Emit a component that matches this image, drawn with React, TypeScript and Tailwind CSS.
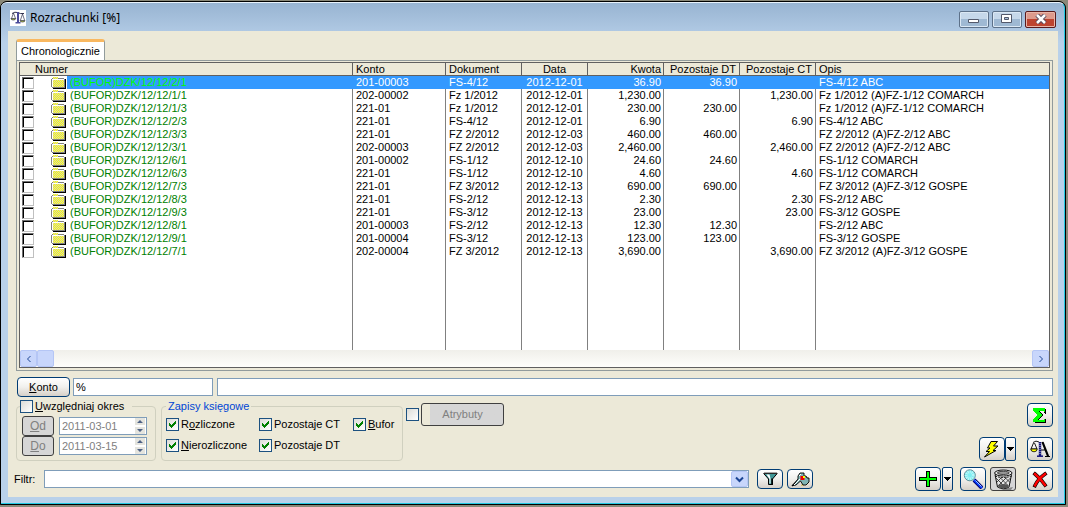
import React from "react";

type Row = [string, string, string, string, string, string, string, string];

const rows: Row[] = [
  ["(BUFOR)DZK/12/12/2/1", "201-00003", "FS-4/12", "2012-12-01", "36.90", "36.90", "", "FS-4/12 ABC"],
  ["(BUFOR)DZK/12/12/1/1", "202-00002", "Fz 1/2012", "2012-12-01", "1,230.00", "", "1,230.00", "Fz 1/2012 (A)FZ-1/12 COMARCH"],
  ["(BUFOR)DZK/12/12/1/3", "221-01", "Fz 1/2012", "2012-12-01", "230.00", "230.00", "", "Fz 1/2012 (A)FZ-1/12 COMARCH"],
  ["(BUFOR)DZK/12/12/2/3", "221-01", "FS-4/12", "2012-12-01", "6.90", "", "6.90", "FS-4/12 ABC"],
  ["(BUFOR)DZK/12/12/3/3", "221-01", "FZ 2/2012", "2012-12-03", "460.00", "460.00", "", "FZ 2/2012 (A)FZ-2/12 ABC"],
  ["(BUFOR)DZK/12/12/3/1", "202-00003", "FZ 2/2012", "2012-12-03", "2,460.00", "", "2,460.00", "FZ 2/2012 (A)FZ-2/12 ABC"],
  ["(BUFOR)DZK/12/12/6/1", "201-00002", "FS-1/12", "2012-12-10", "24.60", "24.60", "", "FS-1/12 COMARCH"],
  ["(BUFOR)DZK/12/12/6/3", "221-01", "FS-1/12", "2012-12-10", "4.60", "", "4.60", "FS-1/12 COMARCH"],
  ["(BUFOR)DZK/12/12/7/3", "221-01", "FZ 3/2012", "2012-12-13", "690.00", "690.00", "", "FZ 3/2012 (A)FZ-3/12 GOSPE"],
  ["(BUFOR)DZK/12/12/8/3", "221-01", "FS-2/12", "2012-12-13", "2.30", "", "2.30", "FS-2/12 ABC"],
  ["(BUFOR)DZK/12/12/9/3", "221-01", "FS-3/12", "2012-12-13", "23.00", "", "23.00", "FS-3/12 GOSPE"],
  ["(BUFOR)DZK/12/12/8/1", "201-00003", "FS-2/12", "2012-12-13", "12.30", "12.30", "", "FS-2/12 ABC"],
  ["(BUFOR)DZK/12/12/9/1", "201-00004", "FS-3/12", "2012-12-13", "123.00", "123.00", "", "FS-3/12 GOSPE"],
  ["(BUFOR)DZK/12/12/7/1", "202-00004", "FZ 3/2012", "2012-12-13", "3,690.00", "", "3,690.00", "FZ 3/2012 (A)FZ-3/12 GOSPE"],
];

const headers = ["Numer", "Konto", "Dokument", "Data", "Kwota", "Pozostaje DT", "Pozostaje CT", "Opis"];
const headAlign = [
  "text-left pl-[15px]",
  "text-left pl-[3px]",
  "text-left pl-[3px]",
  "text-center",
  "text-right pr-[2px]",
  "text-right pr-[3px]",
  "text-right pr-[3px]",
  "text-left pl-[3px]",
];
const cellAlign = [
  "",
  "text-left pl-[3px]",
  "text-left pl-[3px]",
  "text-center",
  "text-right pr-[2px]",
  "text-right pr-[2px]",
  "text-right pr-[2px]",
  "text-left pl-[3px]",
];

const raised =
  "flex shrink-0 items-center justify-center rounded-[4px] border border-[#003c74] bg-linear-to-b from-white via-[#f1f0ed] to-[#d6d0c8]";
const field = "min-w-0 border border-[#7f9db9] bg-white";

// Every other pixel of a block, as one path.
function dither(x0: number, y0: number, w: number, h: number) {
  let d = "";
  for (let y = y0; y < y0 + h; y++) {
    for (let x = x0; x < x0 + w; x++) {
      if ((x + y) % 2 === 0) d += `M${x} ${y}h1v1h-1z`;
    }
  }
  return d;
}

const folderDots = dither(2, 3, 11, 7) + dither(2, 0, 5, 2);

function Folder() {
  return (
    <svg width="15" height="12" viewBox="0 0 15 12" shapeRendering="crispEdges" aria-hidden="true">
      <path fill="#000" d="M2 11h13v1H2zM14 2h1v10h-1z" />
      <path fill="#808080" d="M0 2h1v8H0zM1 10h13v1H1zM13 2h1v9h-1zM1 1h1v1H1zM7 1h6v1H7z" />
      <path fill="#fff" d="M1 2h12v1H1zM1 3h1v7H1z" />
      <path fill="#d0d0c0" d="M2 3h11v7H2zM2 0h5v2H2z" />
      <path fill="#ff0" d={folderDots} />
    </svg>
  );
}

function AppIcon() {
  return (
    <svg width="16" height="16" viewBox="0 0 16 16" className="bg-white" aria-hidden="true">
      <g fill="none" stroke="#33334f">
        <path d="M2 3.500Q5 1.500 7.500 2.500Q10 4 14 3.500" />
        <path d="M3.500 3 1.500 8.500M3.500 3 5.500 8.500M12.500 4 10.500 10M12.500 4 14.500 10" strokeWidth=".7" />
      </g>
      <path fill="#4a4a9a" d="M7 2h2v10H7zM5.500 12h5v1.500h-5z" />
      <path fill="#b4c832" stroke="#33334f" strokeWidth=".7" d="M.9 8.500h4.900Q5.500 10 3.300 10T.9 8.500zM10 10.500h5Q15 12 12.500 12T10 10.500z" />
    </svg>
  );
}

function SigmaIcon() {
  return (
    <svg width="16" height="17" viewBox="0 0 16 17" shapeRendering="crispEdges" aria-hidden="true">
      <path fill="#000" d="M3 2h11v5h-1V6h-1V4H8l3 4-4 5h4l1-1h2v4H3v-2l4-6-4-4z" />
      <path fill="#0f0" d="M1 1h12v4h-1l-1-1H6l4 4-4 5h5l1-1h1v3H1v-2l4-5-4-4z" />
    </svg>
  );
}

function BoltIcon() {
  return (
    <svg width="18" height="18" viewBox="0 0 18 18" aria-hidden="true">
      <path fill="#ff0" stroke="#000" d="M8 1.500h6.500L10.500 6H15l-5 4.500h3L1.500 17l5-5.500H3L7 8H4.500z" />
    </svg>
  );
}

function ScaleLetterIcon() {
  return (
    <svg width="20" height="18" viewBox="0 0 20 18" aria-hidden="true">
      <g fill="none" stroke="#000">
        <path d="M3.500 3 1 9h6L4.500 3M3 2.500Q6 0 9 2" strokeWidth=".9" />
        <path d="M12 2 17.500 16M13 2 18.500 16M11 10h5M15 16.500h5" strokeWidth="1.200" />
      </g>
      <path fill="#ff0" stroke="#000" strokeWidth=".8" d="M.7 9h6.600Q7 11.800 4 11.800T.7 9z" />
      <path stroke="#10107a" strokeWidth="2.400" d="M10 2v14" />
      <path stroke="#aab" strokeWidth="1.200" strokeDasharray="1 1" d="M10 3v12" />
      <path stroke="#10107a" strokeWidth="1.500" d="M7 16.200h6" />
    </svg>
  );
}

function PlusIcon() {
  return (
    <svg width="18" height="16" viewBox="0 0 18 16" shapeRendering="crispEdges" aria-hidden="true">
      <path fill="#000" d="M7 0h4v6h7v4h-7v6H7v-6H0V6h7z" />
      <path fill="#0f0" d="M8 1h2v6h7v2h-7v6H8V9H1V7h7z" />
    </svg>
  );
}

function MagnifierIcon() {
  return (
    <svg width="20" height="20" viewBox="0 0 20 20" aria-hidden="true">
      <path stroke="#000070" strokeWidth="4" d="m11 11 8 8" />
      <path stroke="#0a3cff" strokeWidth="2" d="m11 11 8 8" />
      <path stroke="#9fd0ff" d="m12.500 11.500 6 6" />
      <circle cx="6.800" cy="6.300" r="5.500" fill="#7feef2" stroke="#5d8a94" />
      <circle cx="6.800" cy="6.300" r="3.500" fill="none" stroke="#fff" strokeWidth="3" strokeDasharray="1 1" opacity=".5" />
    </svg>
  );
}

function BinIcon() {
  return (
    <svg width="21" height="21" viewBox="0 0 21 21" aria-hidden="true">
      <path fill="#888" d="m15 19 5-1-2 3H8z" />
      <path fill="#e4e4e4" stroke="#111" d="M2 5.500 4.500 18q6 3.500 11.500 0L18.500 5.500z" />
      <path
        fill="none"
        stroke="#222"
        strokeWidth=".8"
        d="m3 9 8 8M7 8.500l8 8M12 8.500l5 5M17.500 9l-8 8M13.500 8.500l-8 8M8.500 8.500l-5 5"
      />
      <path fill="#555" d="M5 16q5-2 10.500 0L15 18.500q-5 2-9.500 0z" />
      <ellipse cx="10.300" cy="4" rx="8.700" ry="3" fill="#eee" stroke="#111" />
      <ellipse cx="10.300" cy="3.900" rx="6" ry="1.600" fill="#999" stroke="#222" strokeWidth=".8" />
      <path stroke="#111" strokeDasharray="2 1" d="M2 7q8 3 17 0" fill="none" />
    </svg>
  );
}

function CrossIcon() {
  return (
    <svg width="16" height="17" viewBox="0 0 16 17" aria-hidden="true">
      <path fill="none" stroke="#000" strokeWidth="3.600" strokeLinecap="square" d="M3 3Q9 8 13 14M13 3Q6 8 3 14.500" />
      <path fill="none" stroke="#f00" strokeWidth="2.400" strokeLinecap="square" d="M3 3Q9 8 13 14M13 3Q6 8 3 14.500" />
    </svg>
  );
}

function FunnelIcon() {
  return (
    <svg width="15" height="14" viewBox="0 0 15 14" aria-hidden="true">
      <path fill="#3f9696" stroke="#000" d="M.7 1.500h13.500L9.500 7v5.500h-4V7z" />
      <path fill="#fff" d="M3.500 2.500h3l1 4v5h-1V7z" />
      <path stroke="#555" d="M1 1h13" />
      <path stroke="#000" d="M9 6.500V13" strokeWidth="1.500" />
    </svg>
  );
}

function WrenchIcon() {
  return (
    <svg width="19" height="15" viewBox="0 0 19 15" aria-hidden="true">
      <path stroke="#000" strokeWidth="1.500" d="m1 14 8-8" />
      <path fill="#d8b830" d="m10 14 7-2 1-5-3-3z" />
      <path fill="#7fb3b3" stroke="#000" strokeWidth=".9" d="M7 7V4l2-3h4v3h2l1 2h2v4l-3 3h-3L9.500 9 5 13l-3 .5z" />
      <path fill="#e00" d="M9.500 4h4v4h-4z" />
      <path fill="#ff0" d="M12 4h2v2h-2z" />
      <path stroke="#fff" d="m8 4 2-2M3 13l6-6" />
    </svg>
  );
}

function Down() {
  return (
    <svg width="7" height="4" viewBox="0 0 7 4" shapeRendering="crispEdges" aria-hidden="true">
      <path d="M0 0h7v1H6v1H5v1H4v1H3V3H2V2H1V1H0z" />
    </svg>
  );
}

function Tool({ label, children, height = "h-6" }: { label: string; children: React.ReactNode; height?: string }) {
  return (
    <button type="button" aria-label={label} className={`${raised} w-[26px] ${height}`}>
      {children}
    </button>
  );
}

function DropTool({ label, gap, children }: { label: string; gap: string; children: React.ReactNode }) {
  return (
    <div className={`flex ${gap}`}>
      <Tool label={label}>{children}</Tool>
      <button
        type="button"
        aria-label={`${label} – menu`}
        className="flex h-6 w-[11px] shrink-0 items-center justify-center rounded-[2px] border border-[#003c74] bg-linear-to-b from-white via-[#f1f0ed] to-[#d6d0c8]"
      >
        <Down />
      </button>
    </div>
  );
}

const tick =
  "m-0 size-[13px] shrink-0 appearance-none border border-[#1c5180] bg-linear-to-br from-[#dcdcd7] to-white";

function Check({ children }: { children: React.ReactNode }) {
  return (
    <label className="flex items-center gap-[2px] whitespace-nowrap">
      <span className="grid">
        <input type="checkbox" defaultChecked className={`${tick} peer col-start-1 row-start-1`} />
        <svg
          width="13"
          height="13"
          viewBox="0 0 13 13"
          shapeRendering="crispEdges"
          className="pointer-events-none invisible col-start-1 row-start-1 peer-checked:visible"
          aria-hidden="true"
        >
          <path fill="#008000" d="M3 5h1v1h1v1h1V6h1V5h1V4h1V3h1v3H9v1H8v1H7v1H6v1H5V9H4V8H3z" />
        </svg>
      </span>
      <span>{children}</span>
    </label>
  );
}

function DateField({ id, letter, rest, value }: { id: string; letter: string; rest: string; value: string }) {
  return (
    <div className="flex items-center gap-[5px]">
      <button
        type="button"
        disabled
        className="h-5 w-8 rounded-[3px] border border-[#404040] bg-[#d6d6d6] text-xs leading-4 text-[#808080]"
      >
        <u>{letter}</u>
        {rest}
      </button>
      <div className={`${field} flex h-[18px] w-[88px] items-center`}>
        <input
          id={id}
          aria-label={letter + rest}
          disabled
          defaultValue={value}
          className="w-full min-w-0 bg-transparent pl-[2px] text-[#808080]"
        />
        <svg width="12" height="16" viewBox="0 0 12 16" className="shrink-0" aria-hidden="true">
          <path fill="#e4e4de" d="M1 0h10v7H1zM1 9h10v7H1z" />
          <path fill="#4d6185" d="m3 5 3-3 3 3zM3 11h6l-3 3z" />
        </svg>
      </div>
    </div>
  );
}

export default function App() {
  return (
    <div className="flex min-h-screen flex-col bg-[#8a8878] pt-px pr-[2px] pb-[2px] font-['Liberation_Sans',Arial,sans-serif] text-[11px] leading-[13px] text-black">
      <div className="flex flex-1 flex-col rounded-t-[7px] border border-black bg-black">
        <main className="flex flex-1 flex-col rounded-t-md border-t border-r border-b border-[#22c9e3] border-t-[#e8f2fb] bg-[#b9d1ea] bg-linear-to-b from-[#98b4d2] to-[#b9d1ea] to-[40px] pr-[6px] pb-[6px] pl-[7px]">
          <header className="flex h-7 shrink-0 items-center gap-1 pt-[2px] pl-[2px]">
            <AppIcon />
            <h1 className="flex-1 font-['Noto_Sans',sans-serif] text-xs leading-4">Rozrachunki [%]</h1>
            <div className="flex gap-[3px] pt-[2px] pr-[2px]">
              <button
                type="button"
                aria-label="Minimalizuj"
                className="flex h-[17px] w-[30px] items-center justify-center rounded-[2px] border border-[#5d7189] bg-linear-to-b from-[#c6d8ea] from-50% to-[#9fb9d3] to-50% inset-ring inset-ring-[#dbe8f4]"
              >
                <svg width="12" height="12" viewBox="0 0 12 12" aria-hidden="true">
                  <path fill="#fff" stroke="#53596b" d="M.5 6.500h10v3H.5z" />
                </svg>
              </button>
              <button
                type="button"
                aria-label="Maksymalizuj"
                className="flex h-[17px] w-[30px] items-center justify-center rounded-[2px] border border-[#5d7189] bg-linear-to-b from-[#c6d8ea] from-50% to-[#9fb9d3] to-50% inset-ring inset-ring-[#dbe8f4]"
              >
                <svg width="12" height="10" viewBox="0 0 12 10" aria-hidden="true">
                  <path fill="#fff" stroke="#53596b" d="M.5.5h10v8H.5z" />
                  <path fill="#a9c1da" stroke="#53596b" d="M3.500 3.500h4v2h-4z" />
                </svg>
              </button>
              <button
                type="button"
                aria-label="Zamknij"
                className="flex h-[17px] w-[31px] items-center justify-center rounded-[2px] border border-[#5a1a1c] bg-linear-to-b from-[#dd9a8c] from-50% to-[#bd4430] to-50% inset-ring inset-ring-[#e9b5a8]"
              >
                <svg width="12" height="10" viewBox="0 0 12 10" aria-hidden="true">
                  <path stroke="#53485b" strokeWidth="4.500" d="m2 1 8 8M10 1 2 9" />
                  <path stroke="#fff" strokeWidth="2.500" d="m2 1 8 8M10 1 2 9" />
                </svg>
              </button>
            </div>
          </header>

          <div className="flex flex-1 flex-col bg-[#ece9d8] pt-2 pr-[5px] pb-[6px] pl-[6px]">
            <div role="tablist" className="flex pl-[2px]">
              <button
                type="button"
                role="tab"
                aria-selected="true"
                className="h-[21px] rounded-t-[3px] border-x border-t-[3px] border-x-[#919b9c] border-t-[#f9b860] bg-white px-1"
              >
                Chronologicznie
              </button>
            </div>

            <section className="ml-[2px] border border-[#919b9c] pt-px pr-[2px] pb-[2px] pl-[2px]">
              <div className="border border-[#606060] bg-white">
                <table className="w-full table-fixed border-separate border-spacing-0">
                  <colgroup>
                    <col className="w-[333px]" />
                    <col className="w-[93px]" />
                    <col className="w-[76px]" />
                    <col className="w-[66px]" />
                    <col className="w-[76px]" />
                    <col className="w-[76px]" />
                    <col className="w-[76px]" />
                    <col />
                  </colgroup>
                  <thead>
                    <tr className="bg-[#ece9d8]">
                      {headers.map((h, i) => (
                        <th
                          key={h}
                          className={`h-[13px] border-b border-[#606060] py-0 leading-3 font-normal whitespace-nowrap not-last:border-r ${headAlign[i]}`}
                        >
                          {h}
                        </th>
                      ))}
                    </tr>
                  </thead>
                  <tbody>
                    {rows.map((r, n) => (
                      <tr key={r[0]} className={n === 0 ? "text-white" : ""}>
                        <td className={`h-[13px] border-r p-0 ${n === 0 ? "border-[#3399ff]" : "border-[#808080]"}`}>
                          <div className="flex h-[13px] items-center">
                            <input
                              type="checkbox"
                              aria-label={r[0]}
                              className="m-0 ml-[2px] size-[12px] shrink-0 appearance-none border border-t-[#707070] border-r-[#c0c0c0] border-b-[#c0c0c0] border-l-[#707070] bg-white shadow-[inset_1px_1px_0_#000] checked:bg-black"
                            />
                            <span className="ml-[17px] shrink-0">
                              <Folder />
                            </span>
                            <span
                              className={`ml-px flex-1 pl-[3px] whitespace-nowrap ${
                                n === 0 ? "bg-[#3399ff] text-[#00ff00]" : "text-[#008000]"
                              }`}
                            >
                              {r[0]}
                            </span>
                          </div>
                        </td>
                        {r.slice(1).map((v, i) => (
                          <td
                            key={i}
                            className={`h-[13px] overflow-hidden py-0 whitespace-nowrap not-last:border-r ${
                              n === 0 ? "border-[#3399ff] bg-[#3399ff]" : "border-[#808080]"
                            } ${cellAlign[i + 1]}`}
                          >
                            {v}
                          </td>
                        ))}
                      </tr>
                    ))}
                    <tr aria-hidden="true">
                      {headers.map((h) => (
                        <td key={h} className="h-[92px] border-[#808080] p-0 not-last:border-r" />
                      ))}
                    </tr>
                  </tbody>
                </table>
                <div className="flex h-[17px] bg-linear-to-b from-[#f0efea] to-[#fefefb]">
                  <button
                    type="button"
                    aria-label="W lewo"
                    className="flex w-[17px] items-center justify-center rounded-[2px] border border-[#b5c6f5] bg-[#c8d6fb]"
                  >
                    <svg width="6" height="8" viewBox="0 0 6 8" fill="none" stroke="#1c4695" aria-hidden="true">
                      <path d="M4.500 1 1.500 4l3 3" />
                    </svg>
                  </button>
                  <div className="w-[17px] rounded-[2px] border border-[#b5c6f5] bg-[#c8d6fb]" />
                  <div className="flex-1" />
                  <button
                    type="button"
                    aria-label="W prawo"
                    className="flex w-[17px] items-center justify-center rounded-[2px] border border-[#b5c6f5] bg-[#c8d6fb]"
                  >
                    <svg width="6" height="8" viewBox="0 0 6 8" fill="none" stroke="#1c4695" aria-hidden="true">
                      <path d="m1.500 1 3 3-3 3" />
                    </svg>
                  </button>
                </div>
              </div>
            </section>

            <div className="mt-[6px] flex items-center pl-[3px]">
              <button type="button" className={`${raised} h-5 w-[53px]`}>
                <span>
                  <u>K</u>onto
                </span>
              </button>
              <input aria-label="Konto" defaultValue="%" className={`${field} ml-[3px] h-[18px] w-[140px] pl-[2px]`} />
              <input aria-label="Nazwa konta" className={`${field} ml-1 h-[18px] flex-1`} />
            </div>

            <div className="mt-[3px] flex items-start pl-[2px]">
              <fieldset className="h-[61px] w-[140px] rounded-[4px] border border-[#d0d0bf] px-[5px]">
                <legend className="-ml-[2px] pr-2">
                  <label className="flex items-center gap-[2px]">
                    <input type="checkbox" className={`${tick} checked:bg-[#21a121]`} />
                    <span>
                      <u>U</u>względniaj okres
                    </span>
                  </label>
                </legend>
                <div className="pt-[3px]">
                  <DateField id="od" letter="O" rest="d" value="2011-03-01" />
                  <DateField id="do" letter="D" rest="o" value="2011-03-15" />
                </div>
              </fieldset>
              <fieldset className="ml-[5px] h-[61px] w-[242px] rounded-[4px] border border-[#d0d0bf] px-1">
                <legend className="px-[2px] text-[#0046d5]">Zapisy księgowe</legend>
                <div className="grid grid-cols-[93px_94px_auto] gap-y-2 pt-[5px]">
                  <Check>
                    R<u>o</u>zliczone
                  </Check>
                  <Check>Pozostaje CT</Check>
                  <Check>
                    <u>B</u>ufor
                  </Check>
                  <Check>
                    <u>N</u>ierozliczone
                  </Check>
                  <Check>Pozostaje DT</Check>
                </div>
              </fieldset>
              <div className="ml-[3px] flex items-center gap-[2px] pt-[3px]">
                <input type="checkbox" aria-label="Atrybuty" className={`${tick} checked:bg-[#21a121]`} />
                <button
                  type="button"
                  disabled
                  className="h-[23px] w-[83px] rounded-[3px] border border-[#404040] bg-[#d6d6d6] bg-linear-to-r from-[#ece9d8] from-[8px] to-[#d6d6d6] to-[8px] text-[#808080]"
                >
                  Atrybuty
                </button>
              </div>
              <div className="ml-auto flex flex-col items-end gap-[10px] pt-[3px]">
                <Tool label="Suma">
                  <SigmaIcon />
                </Tool>
                <div className="flex gap-[11px]">
                  <DropTool label="Operacje" gap="gap-0">
                    <BoltIcon />
                  </DropTool>
                  <Tool label="Bilans">
                    <ScaleLetterIcon />
                  </Tool>
                </div>
              </div>
            </div>

            <div className="mt-[6px] flex items-center">
              <label htmlFor="filtr" className="w-[30px]">
                Filtr:
              </label>
              <div className={`${field} flex h-[18px] max-w-[705px] flex-1`}>
                <input id="filtr" className="min-w-0 flex-1 bg-transparent px-1" />
                <button
                  type="button"
                  aria-label="Rozwiń"
                  className="flex w-[17px] items-center justify-center rounded-[2px] border border-[#b5c6f5] bg-[#c8d6fb]"
                >
                  <svg width="9" height="7" viewBox="0 0 9 7" fill="none" stroke="#1c4695" strokeWidth="2" aria-hidden="true">
                    <path d="m1 1.500 3.500 3.500L8 1.500" />
                  </svg>
                </button>
              </div>
              <div className="ml-2 flex gap-1">
                <Tool label="Zastosuj filtr" height="h-5">
                  <FunnelIcon />
                </Tool>
                <Tool label="Konstruktor filtra" height="h-5">
                  <WrenchIcon />
                </Tool>
              </div>
              <div className="ml-auto flex">
                <DropTool label="Dodaj" gap="gap-px">
                  <PlusIcon />
                </DropTool>
                <div className="ml-[7px] flex gap-1">
                  <Tool label="Podgląd">
                    <MagnifierIcon />
                  </Tool>
                  <button
                    type="button"
                    aria-label="Usuń"
                    className="flex h-6 w-[26px] items-center justify-center rounded-[3px] border border-[#404040] bg-[#d6d6d6]"
                  >
                    <BinIcon />
                  </button>
                </div>
                <div className="ml-[11px]">
                  <Tool label="Zamknij okno">
                    <CrossIcon />
                  </Tool>
                </div>
              </div>
            </div>
          </div>
        </main>
      </div>
    </div>
  );
}
